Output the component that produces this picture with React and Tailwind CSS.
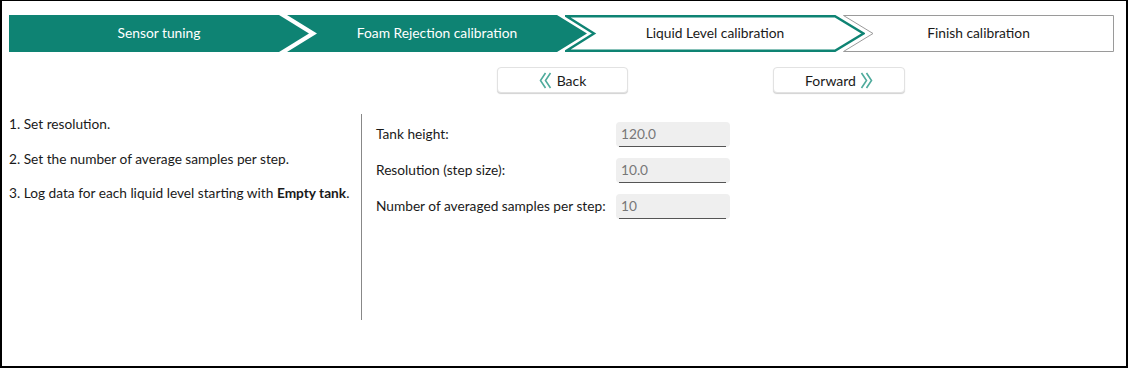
const TEAL = '#0e8373'

const Step = ({ label, kind, first, last }) => {
  const w = last ? 271 : 300
  const h = 37
  const d = 30
  let shape
  if (kind === 'done') {
    const pts = first
      ? `0,0 ${w - d},0 ${w},18.5 ${w - d},37 0,37`
      : `0,0 ${w - d},0 ${w},18.5 ${w - d},37 0,37 ${d},18.5`
    shape = <polygon points={pts} fill={TEAL} />
  } else if (kind === 'active') {
    shape = (
      <polygon
        points={`1.5,1.2 ${w - d},1.2 ${w - 1.5},18.5 ${w - d},35.8 1.5,35.8 ${d - 1},18.5`}
        fill="white"
        stroke={TEAL}
        strokeWidth="2.4"
      />
    )
  } else {
    shape = (
      <polygon
        points={`0.5,0.5 ${w - 0.5},0.5 ${w - 0.5},36.5 0.5,36.5 ${d},18.5`}
        fill="white"
        stroke="#9a9a9a"
        strokeWidth="1"
      />
    )
  }
  return (
    <div
      className={`relative flex items-center justify-center h-[37px] ${first ? '' : '-ml-[22px]'} ${last ? 'w-[271px]' : 'w-[300px]'}`}
    >
      <svg className="absolute inset-0" width={w} height={h} viewBox={`0 0 ${w} ${h}`}>
        {shape}
      </svg>
      <span className={`relative text-[13.8px] ${kind === 'done' ? 'text-white' : 'text-[#1a1a1a]'}`}>
        {label}
      </span>
    </div>
  )
}

// double chevron drawn to match the tall thin arrows on the nav buttons
const Chevrons = ({ dir }) => (
  <svg width="13" height="17" viewBox="0 0 13 17" fill="none" stroke="#4fab9c" strokeWidth="1.6">
    {dir === 'left' ? (
      <>
        <path d="M6.5 1 L1.5 8.5 L6.5 16" />
        <path d="M11.5 1 L6.5 8.5 L11.5 16" />
      </>
    ) : (
      <>
        <path d="M1.5 1 L6.5 8.5 L1.5 16" />
        <path d="M6.5 1 L11.5 8.5 L6.5 16" />
      </>
    )}
  </svg>
)

const Field = ({ label, value }) => (
  <div className="flex items-center h-[25px]">
    <span className="w-[240px] text-[13.7px] text-[#1a1a1a]">{label}</span>
    <div className="w-[114px] h-[25px] bg-[#efefef] rounded-[4px] relative flex items-center px-[5px] text-[13.7px] text-[#777]">
      {value}
      <div className="absolute left-[3px] right-[4px] bottom-0 h-px bg-[#555]" />
    </div>
  </div>
)

const App = () => {
  return (
    <div
      className="w-[1128px] h-[368px] bg-white border-x-2 border-t border-b-2 border-black box-border overflow-hidden"
      style={{ fontFamily: 'Lato, "Noto Sans", sans-serif' }}
    >
      <div className="flex pl-[7px] pt-[14px]">
        <Step label="Sensor tuning" kind="done" first />
        <Step label="Foam Rejection calibration" kind="done" />
        <Step label="Liquid Level calibration" kind="active" />
        <Step label="Finish calibration" kind="todo" last />
      </div>

      <div className="flex pl-[495px] mt-[15px] gap-[145px]">
        <button className="w-[131px] h-[26px] flex items-center justify-center gap-[5px] bg-white border border-[#e2e2e2] rounded-[4px] shadow-[0_1px_1px_rgba(0,0,0,0.18)] text-[14px] text-[#1a1a1a]">
          <Chevrons dir="left" />
          Back
        </button>
        <button className="w-[132px] h-[26px] flex items-center justify-center gap-[4px] bg-white border border-[#e2e2e2] rounded-[4px] shadow-[0_1px_1px_rgba(0,0,0,0.18)] text-[14px] text-[#1a1a1a]">
          Forward
          <Chevrons dir="right" />
        </button>
      </div>

      <div className="flex mt-[21px] pl-[7px]">
        <div className="w-[352px] flex flex-col gap-[14px] text-[13.7px] text-[#1a1a1a]">
          <p>1. Set resolution.</p>
          <p>2. Set the number of average samples per step.</p>
          <p>
            3. Log data for each liquid level starting with <span className="font-bold">Empty tank</span>.
          </p>
        </div>
        <div className="w-px h-[206px] bg-[#888]" />
        <div className="flex flex-col gap-[11px] pl-[14px] pt-[8px]">
          <Field label="Tank height:" value="120.0" />
          <Field label="Resolution (step size):" value="10.0" />
          <Field label="Number of averaged samples per step:" value="10" />
        </div>
      </div>
    </div>
  )
}

export default App
